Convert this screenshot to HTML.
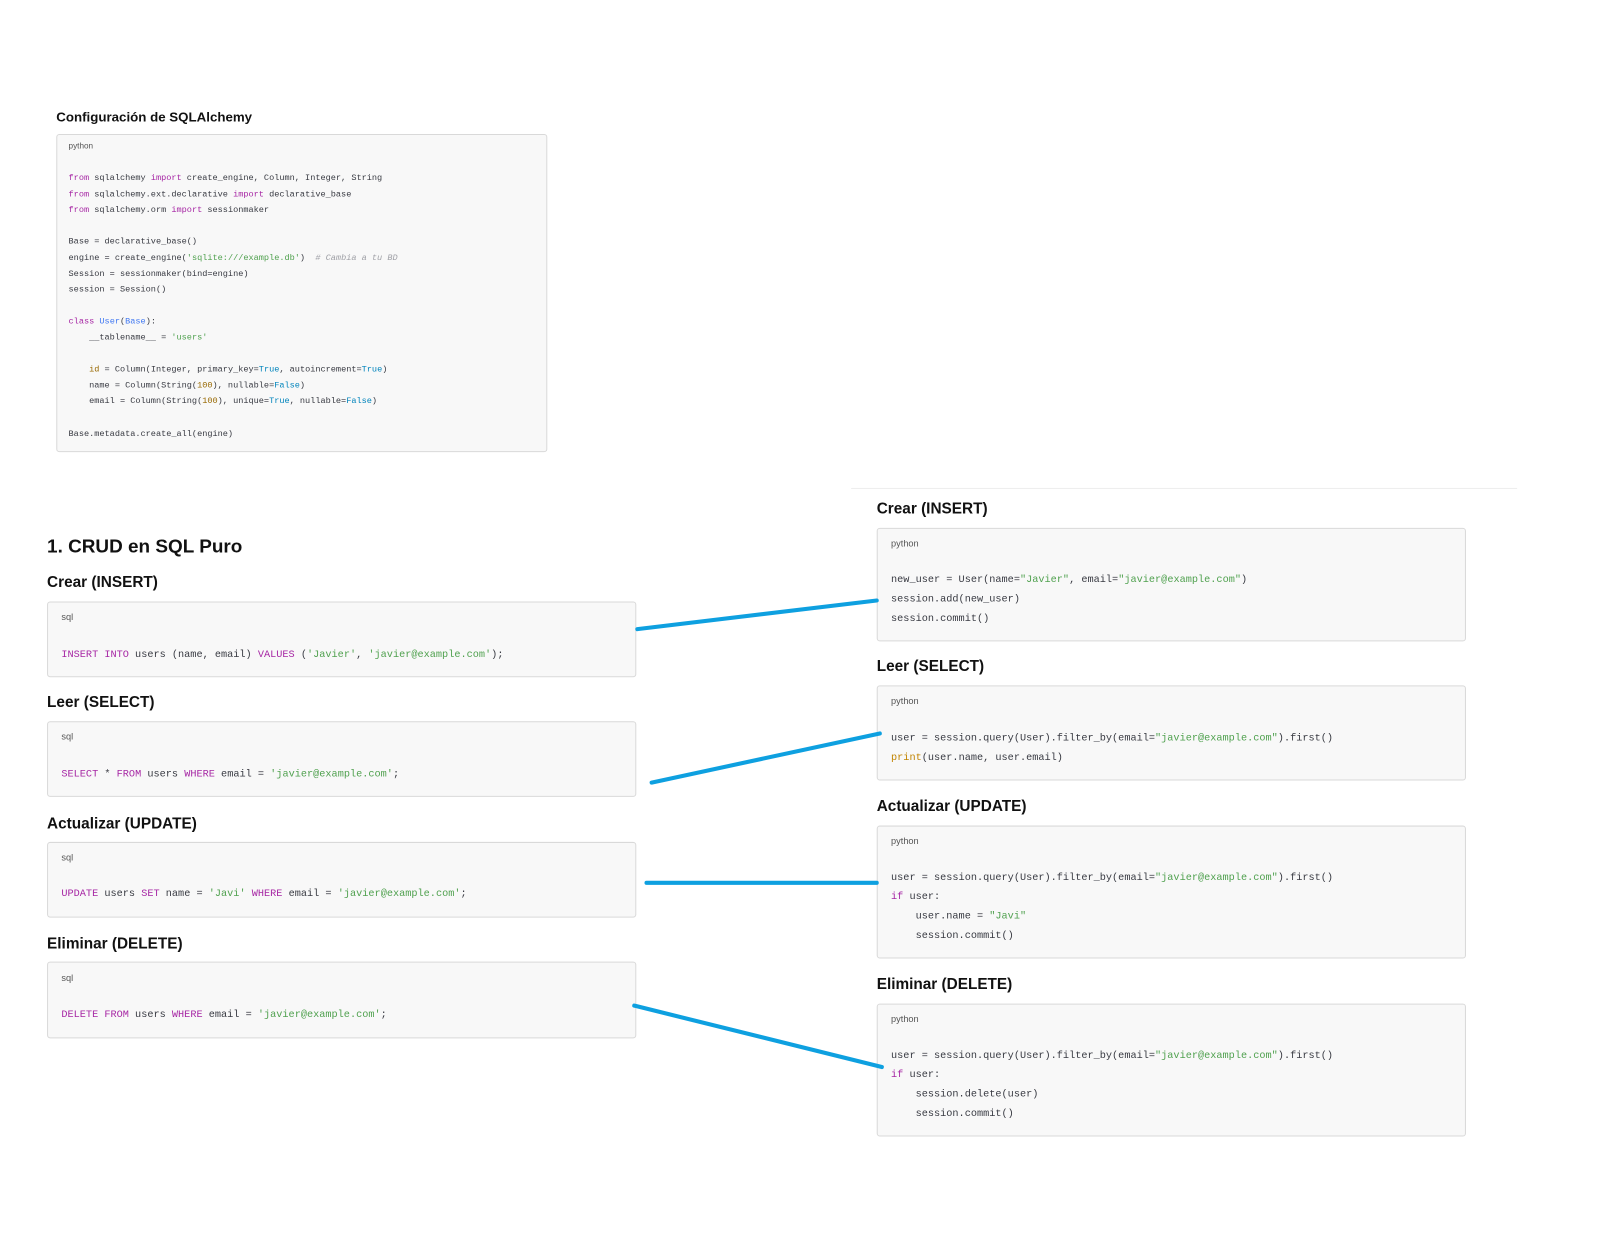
<!DOCTYPE html>
<html><head><meta charset="utf-8"><style>
body{margin:0;width:1604px;height:1246px;background:#fff;position:relative;font-family:"Liberation Sans",sans-serif;color:#111;overflow:hidden}
#w{position:absolute;left:0;top:0;width:1568px;height:1218px;transform:scale(1.023);transform-origin:0 0}
.h{position:absolute;font-weight:bold;white-space:nowrap}
.box{position:absolute;background:#f8f8f8;border:1px solid #d9d9d9;border-radius:3px;box-sizing:border-box}
.lab{position:absolute;font-size:9px;color:#555;font-family:"Liberation Sans",sans-serif}
.c{position:absolute;font-family:"Liberation Mono",monospace;color:#383a42;white-space:pre}
.k{color:#a626a4}.s{color:#50a14f}.n{color:#986801}.b{color:#0184bc}.cm{color:#a0a1a7;font-style:italic}.cl{color:#4078f2}.p{color:#c18401}
</style></head><body><div id="w">
<div class="h" style="left:55px;top:107px;font-size:13px">Configuración de SQLAlchemy</div>
<div class="box" style="left:55px;top:131px;width:480px;height:311px"></div>
<div class="lab" style="left:67px;top:138px;font-size:8px">python</div>
<div class="c" style="left:67px;top:167px;font-size:8.4px;line-height:15.6px"><span class="k">from</span> sqlalchemy <span class="k">import</span> create_engine, Column, Integer, String
<span class="k">from</span> sqlalchemy.ext.declarative <span class="k">import</span> declarative_base
<span class="k">from</span> sqlalchemy.orm <span class="k">import</span> sessionmaker

Base = declarative_base()
engine = create_engine(<span class="s">'sqlite:///example.db'</span>)  <span class="cm"># Cambia a tu BD</span>
Session = sessionmaker(bind=engine)
session = Session()

<span class="k">class</span> <span class="cl">User</span>(<span class="cl">Base</span>):
    __tablename__ = <span class="s">'users'</span>

    <span class="n">id</span> = Column(Integer, primary_key=<span class="b">True</span>, autoincrement=<span class="b">True</span>)
    name = Column(String(<span class="n">100</span>), nullable=<span class="b">False</span>)
    email = Column(String(<span class="n">100</span>), unique=<span class="b">True</span>, nullable=<span class="b">False</span>)

Base.metadata.create_all(engine)</div>

<div class="h" style="left:46px;top:523px;font-size:18.5px">1. CRUD en SQL Puro</div>

<div class="h" style="left:46px;top:561px;font-size:15px">Crear (INSERT)</div>
<div class="box" style="left:46px;top:588px;width:576px;height:74px"></div>
<div class="lab" style="left:60px;top:598px">sql</div>
<div class="c" style="left:60px;top:635px;font-size:10px"><span class="k">INSERT INTO</span> users (name, email) <span class="k">VALUES</span> (<span class="s">'Javier'</span>, <span class="s">'javier@example.com'</span>);</div>

<div class="h" style="left:46px;top:678px;font-size:15px">Leer (SELECT)</div>
<div class="box" style="left:46px;top:705px;width:576px;height:74px"></div>
<div class="lab" style="left:60px;top:715px">sql</div>
<div class="c" style="left:60px;top:752px;font-size:10px"><span class="k">SELECT</span> * <span class="k">FROM</span> users <span class="k">WHERE</span> email = <span class="s">'javier@example.com'</span>;</div>

<div class="h" style="left:46px;top:797px;font-size:15px">Actualizar (UPDATE)</div>
<div class="box" style="left:46px;top:823px;width:576px;height:74px"></div>
<div class="lab" style="left:60px;top:833px">sql</div>
<div class="c" style="left:60px;top:869px;font-size:10px"><span class="k">UPDATE</span> users <span class="k">SET</span> name = <span class="s">'Javi'</span> <span class="k">WHERE</span> email = <span class="s">'javier@example.com'</span>;</div>

<div class="h" style="left:46px;top:914px;font-size:15px">Eliminar (DELETE)</div>
<div class="box" style="left:46px;top:940px;width:576px;height:75px"></div>
<div class="lab" style="left:60px;top:951px">sql</div>
<div class="c" style="left:60px;top:987px;font-size:10px"><span class="k">DELETE FROM</span> users <span class="k">WHERE</span> email = <span class="s">'javier@example.com'</span>;</div>

<div style="position:absolute;left:832px;top:477px;width:651px;height:1px;background:#eee"></div>

<div class="h" style="left:857px;top:489px;font-size:15px">Crear (INSERT)</div>
<div class="box" style="left:857px;top:516px;width:576px;height:111px"></div>
<div class="lab" style="left:871px;top:526px">python</div>
<div class="c" style="left:871px;top:558px;font-size:10px;line-height:19px">new_user = User(name=<span class="s">"Javier"</span>, email=<span class="s">"javier@example.com"</span>)
session.add(new_user)
session.commit()</div>

<div class="h" style="left:857px;top:643px;font-size:15px">Leer (SELECT)</div>
<div class="box" style="left:857px;top:670px;width:576px;height:93px"></div>
<div class="lab" style="left:871px;top:680px">python</div>
<div class="c" style="left:871px;top:713px;font-size:10px;line-height:19px">user = session.query(User).filter_by(email=<span class="s">"javier@example.com"</span>).first()
<span class="p">print</span>(user.name, user.email)</div>

<div class="h" style="left:857px;top:780px;font-size:15px">Actualizar (UPDATE)</div>
<div class="box" style="left:857px;top:807px;width:576px;height:130px"></div>
<div class="lab" style="left:871px;top:817px">python</div>
<div class="c" style="left:871px;top:849px;font-size:10px;line-height:19px">user = session.query(User).filter_by(email=<span class="s">"javier@example.com"</span>).first()
<span class="k">if</span> user:
    user.name = <span class="s">"Javi"</span>
    session.commit()</div>

<div class="h" style="left:857px;top:954px;font-size:15px">Eliminar (DELETE)</div>
<div class="box" style="left:857px;top:981px;width:576px;height:130px"></div>
<div class="lab" style="left:871px;top:991px">python</div>
<div class="c" style="left:871px;top:1023px;font-size:10px;line-height:19px">user = session.query(User).filter_by(email=<span class="s">"javier@example.com"</span>).first()
<span class="k">if</span> user:
    session.delete(user)
    session.commit()</div>

<svg style="position:absolute;left:0;top:0" width="1568" height="1218">
<g stroke="#0ea0e0" stroke-width="4" stroke-linecap="round">
<line x1="623" y1="615" x2="857" y2="587"/>
<line x1="637" y1="765" x2="860" y2="717"/>
<line x1="632" y1="863" x2="857" y2="863"/>
<line x1="620" y1="983" x2="862" y2="1043"/>
</g></svg>
</div></body></html>
